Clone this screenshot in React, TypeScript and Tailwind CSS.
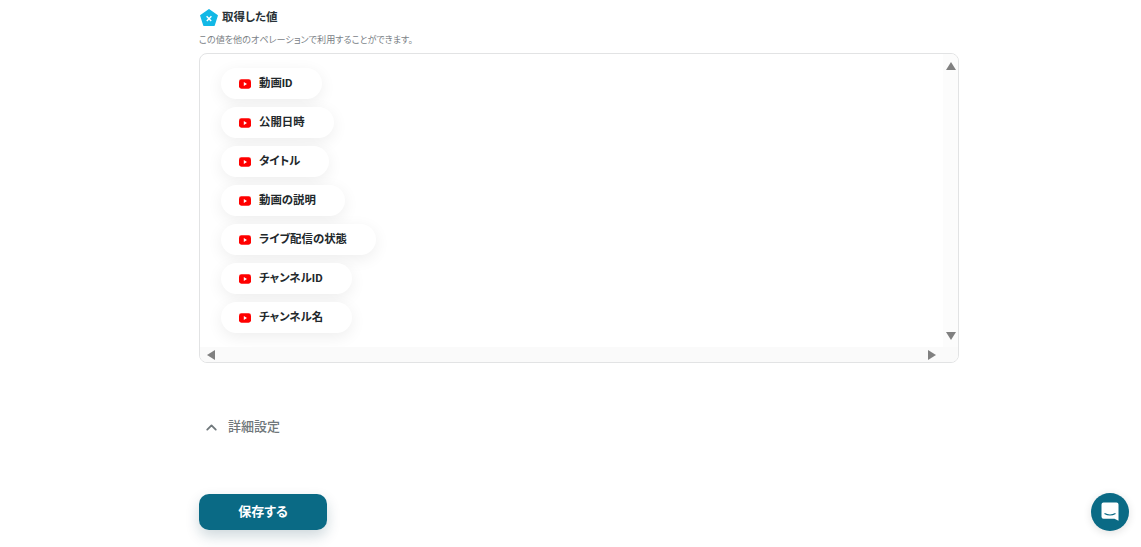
import { ChevronUp } from "lucide-react";

const fields = ["動画ID", "公開日時", "タイトル", "動画の説明", "ライブ配信の状態", "チャンネルID", "チャンネル名"];

function YoutubeIcon() {
  return (
    <svg width="12" height="10" viewBox="0 0 12 10" className="shrink-0">
      <rect width="12" height="9.5" y="0.25" rx="2.4" fill="#ff0000" />
      <path d="M4.8 3 8 5 4.8 7z" fill="#fff" />
    </svg>
  );
}

function Arrow({ dir }: { dir: "up" | "down" | "left" | "right" }) {
  const paths = {
    up: "M5 0 10 8H0z",
    down: "M0 0H10L5 8z",
    left: "M8 0V10L0 5z",
    right: "M0 0V10L8 5z",
  };
  const size = dir === "up" || dir === "down" ? "w-[10px] h-[8px]" : "w-[8px] h-[10px]";
  const box = dir === "up" || dir === "down" ? "0 0 10 8" : "0 0 8 10";
  return (
    <svg viewBox={box} className={size}>
      <path d={paths[dir]} fill="#808080" />
    </svg>
  );
}

function FieldPill({ label }: { label: string }) {
  return (
    <div className="flex h-[31px] w-fit items-center gap-2 rounded-full bg-white pl-[18px] pr-[29px] shadow-[0_4px_16px_rgba(0,0,0,0.07)]">
      <YoutubeIcon />
      <span className="text-[11.4px] font-bold leading-none text-[#22282b]">{label}</span>
    </div>
  );
}

export default function App() {
  return (
    <div className="relative h-[547px] w-[1141px] overflow-hidden bg-white font-['Roboto','Noto_Sans_CJK_JP',sans-serif] [font-feature-settings:'palt']">
      <div className="w-[760px] ml-[199px] pt-[9px]">
        <div className="flex h-[18px] items-center gap-[4px] pl-[1px]">
          <svg width="18" height="18" viewBox="0 0 18 18">
            <path d="M9 0.8 17.2 6.6 14.1 16.4H3.9L0.8 6.6z" fill="#12b8e6" stroke="#12b8e6" strokeWidth="1.4" strokeLinejoin="round" />
            <path d="M6.6 7.2 11.2 12M11.4 7.2 6.8 12" stroke="#fff" strokeWidth="1.4" fill="none" />
          </svg>
          <span className="text-[11.5px] font-bold text-[#283237]">取得した値</span>
        </div>
        <p className="mt-[6px] text-[9.1px] leading-[14px] text-[#7b8287]">この値を他のオペレーションで利用することができます。</p>
        <div className="mt-[6px] flex h-[310px] flex-col overflow-hidden rounded-lg border border-[#e2e3e4] bg-white">
          <div className="flex min-h-0 flex-1">
            <div className="flex flex-1 flex-col gap-2 pl-[21px] pt-[14px]">
              {fields.map((f) => (
                <FieldPill key={f} label={f} />
              ))}
            </div>
            <div className="flex w-[15px] flex-col items-center justify-between bg-[#fcfcfc] pb-[7px] pt-[8px]">
              <Arrow dir="up" />
              <Arrow dir="down" />
            </div>
          </div>
          <div className="flex h-[15px] items-center justify-between bg-[#fafafa] pl-[7px] pr-[22px]">
            <Arrow dir="left" />
            <Arrow dir="right" />
          </div>
        </div>
        <button className="mt-[54px] flex h-[20px] items-center gap-[8px] pl-[4px] text-[13px] font-medium text-[#6f777b]">
          <ChevronUp size={17} strokeWidth={2.6} className="text-[#6f777b]" />
          <span>詳細設定</span>
        </button>
        <button className="mt-[57px] h-[36px] w-[128px] rounded-[10px] bg-[#0a6a85] text-[13px] font-bold text-white shadow-[0_6px_14px_rgba(10,60,80,0.2)]">
          保存する
        </button>
      </div>
      <div className="absolute left-[1091px] top-[493px] flex h-[38px] w-[38px] items-center justify-center rounded-full bg-[#0a6a85] shadow-[0_2px_8px_rgba(0,0,0,0.12)]">
        <svg width="18" height="20" viewBox="0 0 18 20">
          <path d="M2.5 0.5H15.5a2 2 0 0 1 2 2V18.8L13.5 16.8H2.5a2 2 0 0 1-2-2V2.5a2 2 0 0 1 2-2z" fill="#fff" />
          <path d="M3.5 11.5Q9 14.5 14.5 11.5" stroke="#0a6a85" strokeWidth="1.2" fill="none" />
        </svg>
      </div>
    </div>
  );
}
